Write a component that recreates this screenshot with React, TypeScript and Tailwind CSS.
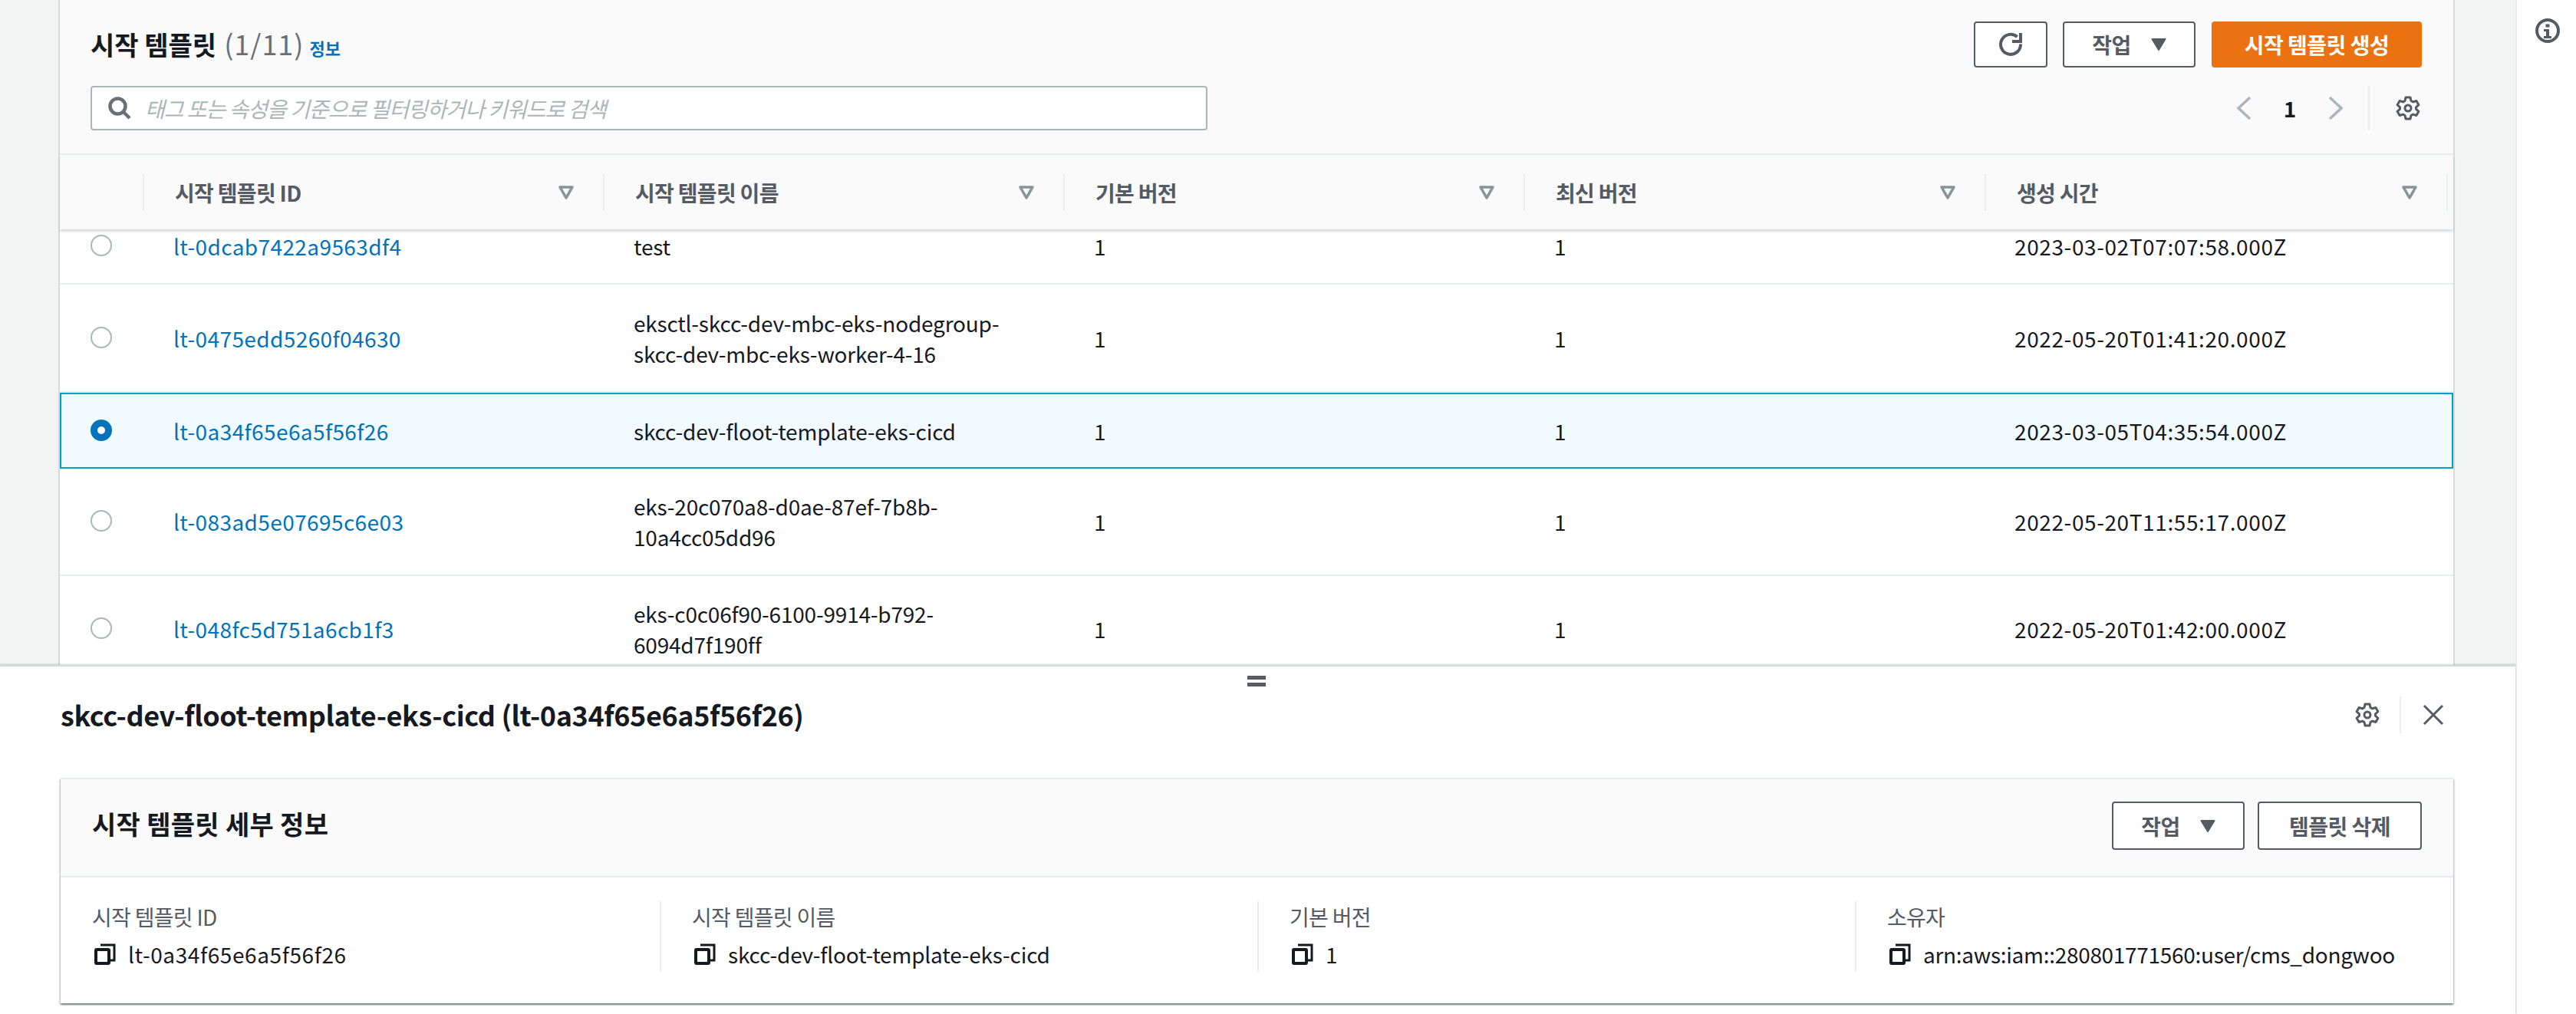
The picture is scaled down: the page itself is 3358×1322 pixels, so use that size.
const rows = [
  { id: 'lt-0dcab7422a9563df4', name: ['test'], created: '2023-03-02T07:07:58.000Z', height: 'h-[98px]' },
  {
    id: 'lt-0475edd5260f04630',
    name: ['eksctl-skcc-dev-mbc-eks-nodegroup-', 'skcc-dev-mbc-eks-worker-4-16'],
    created: '2022-05-20T01:41:20.000Z',
    height: 'h-[141px]',
  },
  {
    id: 'lt-0a34f65e6a5f56f26',
    name: ['skcc-dev-floot-template-eks-cicd'],
    created: '2023-03-05T04:35:54.000Z',
    height: 'h-[99px]',
    selected: true,
  },
  {
    id: 'lt-083ad5e07695c6e03',
    name: ['eks-20c070a8-d0ae-87ef-7b8b-', '10a4cc05dd96'],
    created: '2022-05-20T11:55:17.000Z',
    height: 'h-[140px]',
  },
  {
    id: 'lt-048fc5d751a6cb1f3',
    name: ['eks-c0c06f90-6100-9914-b792-', '6094d7f190ff'],
    created: '2022-05-20T01:42:00.000Z',
    height: 'h-[140px]',
  },
]

const columns = ['시작 템플릿 ID', '시작 템플릿 이름', '기본 버전', '최신 버전', '생성 시간']

const details = [
  { label: '시작 템플릿 ID', value: 'lt-0a34f65e6a5f56f26', track: 'tracking-[0.6px]' },
  { label: '시작 템플릿 이름', value: 'skcc-dev-floot-template-eks-cicd', track: 'tracking-[-0.2px]' },
  { label: '기본 버전', value: '1', track: '' },
  { label: '소유자', value: 'arn:aws:iam::280801771560:user/cms_dongwoo', track: 'tracking-[-0.3px]' },
]

function GearIcon() {
  return (
    <svg width="32" height="32" viewBox="0 0 32 32" fill="none" stroke="#545b64" strokeWidth="3" strokeLinejoin="round" className="shrink-0">
      <path d="M13 2h6l1 4.500 2.500 1.400 4.400-1.400 3 5.200-3.400 3.100v2.400l3.400 3.100-3 5.200-4.400-1.400-2.500 1.400-1 4.500h-6l-1-4.500-2.500-1.400-4.400 1.400-3-5.200 3.400-3.100v-2.400l-3.400-3.100 3-5.200 4.400 1.400 2.500-1.400z" />
      <circle cx="16" cy="16" r="4" />
    </svg>
  )
}

function SortIcon() {
  return (
    <svg width="20" height="18" viewBox="0 0 20 18" className="shrink-0">
      <path d="M2 2h16l-8 14z" fill="none" stroke="#879596" strokeWidth="3.5" strokeLinejoin="round" />
    </svg>
  )
}

function CaretDown() {
  return (
    <svg width="20" height="16" viewBox="0 0 20 16" className="shrink-0">
      <path d="M1.5 1h17L10 15z" fill="#545b64" stroke="#545b64" strokeWidth="2" strokeLinejoin="round" />
    </svg>
  )
}

function CopyIcon() {
  return (
    <svg width="28" height="28" viewBox="0 0 28 28" className="shrink-0 ml-[3px]">
      <rect x="2" y="8" width="17" height="18" rx="1" fill="none" stroke="#16191f" strokeWidth="4" />
      <path d="M8 2h18v20h-5" fill="none" stroke="#16191f" strokeWidth="3" />
    </svg>
  )
}

function Radio({ checked }: { checked?: boolean }) {
  if (checked) {
    return <div className="w-[28px] h-[28px] rounded-full border-[9px] border-[#0073bb] bg-white" />
  }
  return <div className="w-[28px] h-[28px] rounded-full border-2 border-[#aab7b8] bg-white" />
}

function OutlineButton({ label, caret, tall }: { label: string; caret?: boolean; tall?: boolean }) {
  return (
    <button
      type="button"
      className={`flex items-center justify-center gap-[26px] border-2 border-[#545b64] rounded-[4px] bg-white text-[#545b64] text-[28px] leading-[40px] font-bold tracking-[-0.5px] ${
        tall ? 'h-[63px]' : 'h-[60px]'
      } ${caret ? 'w-[173px]' : 'w-[214px]'}`}
    >
      <span>{label}</span>
      {caret && <CaretDown />}
    </button>
  )
}

export default function App() {
  return (
    <div className="flex h-[1322px] w-[3358px] overflow-hidden bg-white text-[#16191f] text-[28px] leading-[40px] font-['Noto_Sans_CJK_KR',sans-serif]">
      <div className="flex flex-col w-[3279px] shrink-0">
        <div className="flex h-[867px] shrink-0 bg-[#f2f3f3] overflow-hidden">
          <div className="w-[76px] shrink-0" />
          <div className="flex flex-col w-[3124px] shrink-0 border-x-2 border-[#d5dbdb] bg-white">
            <div className="h-[202px] shrink-0 bg-[#fafafa] pt-[28px] pl-[40px] pr-[41px] border-b-2 border-[#eaeded]">
              <div className="flex items-center justify-between h-[60px]">
                <div className="flex items-baseline -mt-[2px]">
                  <h1 className="text-[34px] leading-[44px] font-bold">시작 템플릿</h1>
                  <span className="ml-[10px] text-[36px] leading-[44px] tracking-[1px] text-[#687078]">(1/11)</span>
                  <a className="ml-[7px] text-[22px] leading-[32px] font-bold text-[#0073bb]">정보</a>
                </div>
                <div className="flex items-center">
                  <button
                    type="button"
                    className="flex items-center justify-center w-[96px] h-[60px] border-2 border-[#545b64] rounded-[4px] bg-white"
                  >
                    <svg width="32" height="32" viewBox="0 0 32 32" fill="none" stroke="#545b64" strokeWidth="4">
                      <path d="M29 15.500A13 13 0 1 1 24.500 6" />
                      <path d="M29 1v11H18" />
                    </svg>
                  </button>
                  <div className="ml-[20px]">
                    <OutlineButton label="작업" caret />
                  </div>
                  <button
                    type="button"
                    className="ml-[21px] w-[274px] h-[60px] rounded-[4px] bg-[#ec7211] text-white text-[28px] leading-[40px] font-bold tracking-[-0.5px]"
                  >
                    시작 템플릿 생성
                  </button>
                </div>
              </div>
              <div className="flex items-center justify-between mt-[24px] h-[58px]">
                <div className="flex items-center w-[1456px] h-[58px] border-2 border-[#aab7b8] rounded-[4px] bg-white pl-[21px]">
                  <svg width="30" height="30" viewBox="0 0 30 30" fill="none" stroke="#687078" strokeWidth="4.500" className="shrink-0">
                    <circle cx="12.500" cy="12.500" r="10" />
                    <path d="M19.500 19.500L28 28" />
                  </svg>
                  <span className="ml-[18px] italic text-[#aab7b8] tracking-[-1px]">태그 또는 속성을 기준으로 필터링하거나 키워드로 검색</span>
                </div>
                <div className="flex items-center mr-[2px]">
                  <svg width="20" height="32" viewBox="0 0 20 32" fill="none" stroke="#aab7b8" strokeWidth="3.500">
                    <path d="M18 2L3 16l15 14" />
                  </svg>
                  <span className="w-[100px] text-center font-bold">1</span>
                  <svg width="20" height="32" viewBox="0 0 20 32" fill="none" stroke="#aab7b8" strokeWidth="3.500">
                    <path d="M2 2l15 14L2 30" />
                  </svg>
                  <div className="ml-[32px] w-[2px] h-[58px] bg-[#eaeded]" />
                  <div className="ml-[34px]">
                    <GearIcon />
                  </div>
                </div>
              </div>
            </div>

            <div className="relative z-10 grid grid-cols-[108px_600px_600px_600px_601px_602px_1fr] items-center h-[97px] shrink-0 bg-[#fafafa] shadow-[0_3px_3px_0_rgba(0,28,36,0.15)] text-[#545b64] font-bold tracking-[-0.7px]">
              <div />
              {columns.map((label) => (
                <div key={label} className="flex items-center justify-between h-[48px] border-l-2 border-[#eaeded] pl-[40px] pr-[38px]">
                  <span>{label}</span>
                  <SortIcon />
                </div>
              ))}
              <div className="h-[48px] border-l-2 border-[#eaeded]" />
            </div>

            <div className="flex-1 overflow-hidden">
              <div className="-mt-[26px]">
                {rows.map((row) => (
                  <div
                    key={row.id}
                    className={`grid grid-cols-[108px_600px_600px_600px_600px_1fr] items-center ${row.height} ${
                      row.selected ? 'outline-2 -outline-offset-2 outline-[#00a1c9] bg-[#f1faff]' : 'border-b-2 border-[#eaeded]'
                    }`}
                  >
                    <div className="pl-[40px] -mt-[2px]">
                      <Radio checked={row.selected} />
                    </div>
                    <a className="pl-[40px] text-[#0073bb] tracking-[0.4px]">{row.id}</a>
                    <div className="pl-[40px] whitespace-nowrap tracking-[-0.2px]">
                      {row.name.map((line) => (
                        <div key={line}>{line}</div>
                      ))}
                    </div>
                    <div className="pl-[40px]">1</div>
                    <div className="pl-[40px]">1</div>
                    <div className="pl-[40px] tracking-[0.6px]">{row.created}</div>
                  </div>
                ))}
              </div>
            </div>
          </div>
          <div className="flex-1" />
        </div>

        <div className="relative z-20 flex-1 bg-white border-t-2 border-[#d5dbdb] shadow-[0_-1px_2px_0_rgba(0,28,36,0.2)]">
          <div className="flex flex-col items-center gap-[4px] h-[28px] pt-[12px] pr-[3px]">
            <div className="w-[24px] h-[5px] bg-[#545b64]" />
            <div className="w-[24px] h-[5px] bg-[#545b64]" />
          </div>
          <div className="flex items-center justify-between h-[70px] pl-[79px] pr-[93px]">
            <h2 className="text-[36px] leading-[44px] font-bold tracking-[-0.4px] -mt-[2px]">skcc-dev-floot-template-eks-cicd (lt-0a34f65e6a5f56f26)</h2>
            <div className="flex items-center">
              <GearIcon />
              <div className="ml-[26px] w-[2px] h-[48px] bg-[#eaeded]" />
              <svg width="28" height="28" viewBox="0 0 28 28" fill="none" stroke="#545b64" strokeWidth="3" className="ml-[28px] shrink-0">
                <path d="M2 2l24 24M26 2L2 26" />
              </svg>
            </div>
          </div>
          <div className="ml-[79px] mr-[81px] mt-[47px] h-[294px] bg-white border-t-2 border-[#eaeded] shadow-[0_2px_2px_0_rgba(0,28,36,0.45),2px_2px_2px_0_rgba(0,28,36,0.1),-2px_2px_2px_0_rgba(0,28,36,0.1)]">
            <div className="flex items-center justify-between h-[128px] bg-[#fafafa] border-b-2 border-[#eaeded] pl-[41px] pr-[41px]">
              <h3 className="text-[34px] leading-[44px] font-bold tracking-[0.3px] -mt-[10px]">시작 템플릿 세부 정보</h3>
              <div className="flex items-center gap-[17px] -mt-[5px]">
                <OutlineButton label="작업" caret tall />
                <OutlineButton label="템플릿 삭제" tall />
              </div>
            </div>
            <div className="grid grid-cols-[781px_779px_779px_1fr] pt-[31px]">
              {details.map((item, i) => (
                <div
                  key={item.label}
                  className={`h-[92px] ${i === 0 ? 'pl-[41px]' : 'pl-[40px] border-l-2 border-[#eaeded]'}`}
                >
                  <div className="text-[#545b64] tracking-[-0.7px]">{item.label}</div>
                  <div className="flex items-center gap-[16px] mt-[9px]">
                    <CopyIcon />
                    <span className={item.track}>{item.value}</span>
                  </div>
                </div>
              ))}
            </div>
          </div>
        </div>
      </div>

      <div className="flex-1 border-l-2 border-[#eaeded] bg-white pt-[24px] pl-[24px]">
        <svg width="32" height="32" viewBox="0 0 32 32" fill="none">
          <circle cx="16" cy="16" r="14" stroke="#545b64" strokeWidth="4" />
          <rect x="13.500" y="7.500" width="5" height="4" fill="#545b64" />
          <path d="M11 14h7v9h3v3H11v-3h3v-6h-3z" fill="#545b64" />
        </svg>
      </div>
    </div>
  )
}
